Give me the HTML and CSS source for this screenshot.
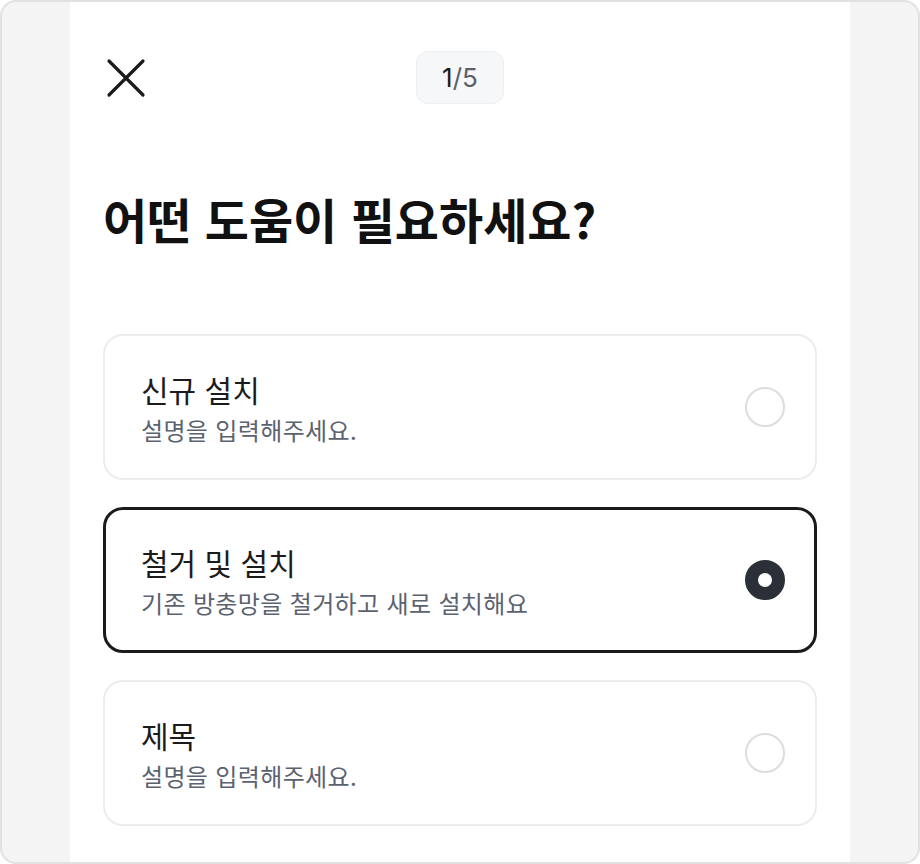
FILE: index.html
```html
<!DOCTYPE html>
<html lang="ko">
<head>
<meta charset="utf-8">
<link rel="stylesheet" href="styles.css">
</head>
<body>
<div class="frame">
  <div class="sheet">
    <header class="header">
      <button class="close" aria-label="닫기">
        <svg width="40" height="40" viewBox="0 0 40 40"><path d="M3 3 L37 37 M37 3 L3 37" stroke="#1b1b1d" stroke-width="3.2" stroke-linecap="round" fill="none"/></svg>
      </button>
      <div class="step"><span class="cur">1</span>/5</div>
      <div></div>
    </header>
    <h1 class="title">어떤 도움이 필요하세요?</h1>
    <div class="options">
      <div class="option">
        <div class="texts">
          <div class="opt-title">신규 설치</div>
          <div class="opt-desc">설명을 입력해주세요.</div>
        </div>
        <span class="radio"></span>
      </div>
      <div class="option selected">
        <div class="texts">
          <div class="opt-title">철거 및 설치</div>
          <div class="opt-desc">기존 방충망을 철거하고 새로 설치해요</div>
        </div>
        <span class="radio"></span>
      </div>
      <div class="option">
        <div class="texts">
          <div class="opt-title">제목</div>
          <div class="opt-desc">설명을 입력해주세요.</div>
        </div>
        <span class="radio"></span>
      </div>
    </div>
  </div>
</div>
</body>
</html>
```

FILE: styles.css
```css
html, body {
  margin: 0;
  padding: 0;
  background: #ffffff;
}
body {
  font-family: "Noto Sans CJK KR", "Noto Sans", sans-serif;
  color: #1b1b1d;
}
.frame {
  width: 920px;
  height: 864px;
  box-sizing: border-box;
  border: 2px solid #e1e1e1;
  border-radius: 16px;
  background: #f4f4f4;
  overflow: hidden;
  display: flex;
  justify-content: center;
}
.sheet {
  width: 780px;
  background: #ffffff;
  box-sizing: border-box;
  padding: 49px 33px 0;
}
.header {
  display: grid;
  grid-template-columns: 1fr auto 1fr;
  align-items: center;
  height: 53px;
}
.close {
  justify-self: start;
  width: 40px;
  height: 40px;
  padding: 0;
  margin-left: 3px;
  border: 0;
  background: none;
  display: flex;
}
.step {
  height: 53px;
  width: 88px;
  box-sizing: border-box;
  border: 1px solid #eceef1;
  border-radius: 12px;
  background: #f6f7f9;
  display: flex;
  align-items: center;
  justify-content: center;
  font-family: "Inter", "Noto Sans", sans-serif;
  font-size: 26px;
  color: #5a5f68;
}
.step .cur {
  color: #1b1b1d;
}
.title {
  margin: 84px 0 0;
  font-size: 48px;
  line-height: 60px;
  font-weight: 700;
  letter-spacing: 0;
  color: #111111;
}
.options {
  margin-top: 86px;
  display: flex;
  flex-direction: column;
  gap: 27px;
}
.option {
  height: 146px;
  flex: none;
  box-sizing: border-box;
  border: 2px solid #ececec;
  border-radius: 20px;
  display: flex;
  align-items: center;
  justify-content: space-between;
  padding: 2px 30px 0 36px;
}
.option.selected {
  border: 3px solid #1b1b1d;
  padding: 2px 29px 0 35px;
  height: 146px;
}
.texts {
  display: flex;
  flex-direction: column;
  gap: 6px;
}
.opt-title {
  font-size: 30px;
  line-height: 38px;
  font-weight: 400;
  color: #1b1b1d;
}
.opt-desc {
  font-size: 24px;
  line-height: 32px;
  letter-spacing: 0.35px;
  color: #5b6270;
}
.radio {
  width: 40px;
  height: 40px;
  margin-top: -2px;
  box-sizing: border-box;
  border: 2px solid #dcdde0;
  border-radius: 50%;
}
.selected .radio {
  border: 13px solid #2a2f38;
  background: #ffffff;
}
```
